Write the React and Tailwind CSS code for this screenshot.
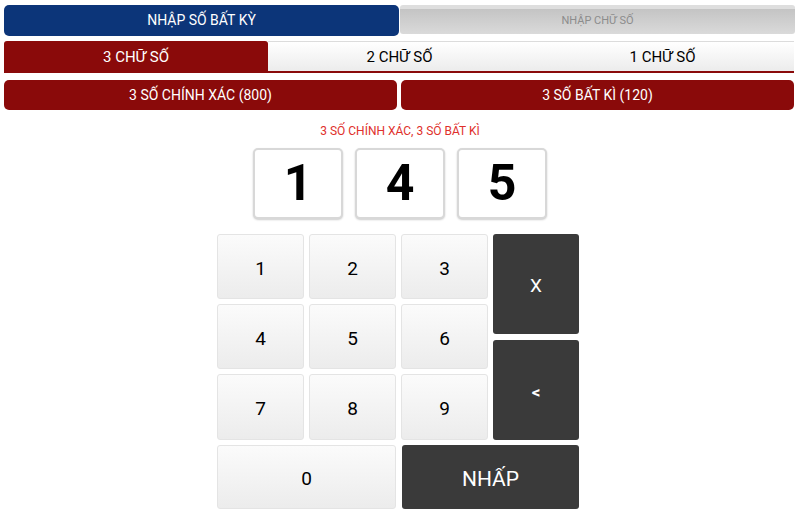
import React, { useState } from 'react';

const Key = ({ label, dark, className = '' }) => (
    <button
        className={
            dark
                ? `rounded-[3px] bg-[#3a3a3a] text-white pt-[5px] flex items-center justify-center ${className}`
                : `rounded-[3px] border border-[#e4e4e4] bg-gradient-to-b from-[#fbfbfb] to-[#ececec] text-black text-[19px] pt-[5px] flex items-center justify-center ${className}`
        }
    >
        {label}
    </button>
);

const App = () => {
    const [digits] = useState(['1', '4', '5']);
    const modes = ['3 CHỮ SỐ', '2 CHỮ SỐ', '1 CHỮ SỐ'];

    return (
        <div className="w-[800px] h-[514px] bg-white font-['Roboto',sans-serif] overflow-hidden">
            <div className="flex ml-[4px] mr-[5px] pt-[5px]">
                <div className="w-[395px] h-[31px] rounded-[5px] bg-[#0c3579] text-white text-[14px] flex items-center justify-center">
                    NHẬP SỐ BẤT KỲ
                </div>
                <div className="flex-1 h-[29px] ml-[1px] rounded-[3px] border-t-[4px] border-[#dedede] bg-gradient-to-b from-[#c4c4c4] to-[#dadada] text-[#8c8c8c] text-[11px] flex items-center justify-center">
                    NHẬP CHỮ SỐ
                </div>
            </div>

            <div className="flex ml-[4px] mr-[6px] mt-[5px] h-[32px] border-b-2 border-[#8a0a0a]">
                {modes.map((m, i) => (
                    <div
                        key={m}
                        className={
                            i === 0
                                ? 'w-[264px] rounded-t-[3px] bg-[#8a0a0a] text-white text-[15px] pt-[2px] flex items-center justify-center'
                                : 'flex-1 border-t border-[#dcdcdc] bg-gradient-to-b from-white to-[#ececec] text-black text-[15px] pt-[2px] flex items-center justify-center'
                        }
                    >
                        {m}
                    </div>
                ))}
            </div>

            <div className="flex gap-[4px] ml-[4px] mr-[6px] mt-[7px]">
                <div className="flex-1 h-[30px] rounded-[5px] bg-[#8a0a0a] text-white text-[14px] flex items-center justify-center">
                    3 SỐ CHÍNH XÁC (800)
                </div>
                <div className="flex-1 h-[30px] rounded-[5px] bg-[#8a0a0a] text-white text-[14px] flex items-center justify-center">
                    3 SỐ BẤT KÌ (120)
                </div>
            </div>

            <div className="mt-[14px] text-center text-[12px] text-[#e0302b] leading-[14px]">
                3 SỐ CHÍNH XÁC, 3 SỐ BẤT KÌ
            </div>

            <div className="flex justify-center gap-[12px] mt-[10px]">
                {digits.map((d, i) => (
                    <div
                        key={i}
                        className="w-[90px] h-[71px] rounded-[5px] border-2 border-[#d8d8d8] bg-white shadow-[0_1px_2px_rgba(0,0,0,0.2)] text-black text-[50px] font-bold flex items-center justify-center"
                    >
                        {d}
                    </div>
                ))}
            </div>

            <div className="w-[364px] mt-[15px] ml-[217px] grid grid-cols-[87px_87px_87px_86px] grid-rows-[65px_65px_66px_64px] gap-x-[5px] gap-y-[5px]">
                <Key label="1" />
                <Key label="2" />
                <Key label="3" />
                <Key label="X" dark className="h-[100px] text-[19px]" />
                <Key label="4" />
                <Key label="5" />
                <Key label="6" />
                <div className="row-span-2 flex flex-col justify-end">
                    <Key label="<" dark className="h-[100px] text-[17px] font-bold" />
                </div>
                <Key label="7" />
                <Key label="8" />
                <Key label="9" />
                <Key label="0" className="col-span-2" />
                <Key label="NHẤP" dark className="col-span-2 text-[21px] ml-[1px]" />
            </div>
        </div>
    );
};

export default App;
